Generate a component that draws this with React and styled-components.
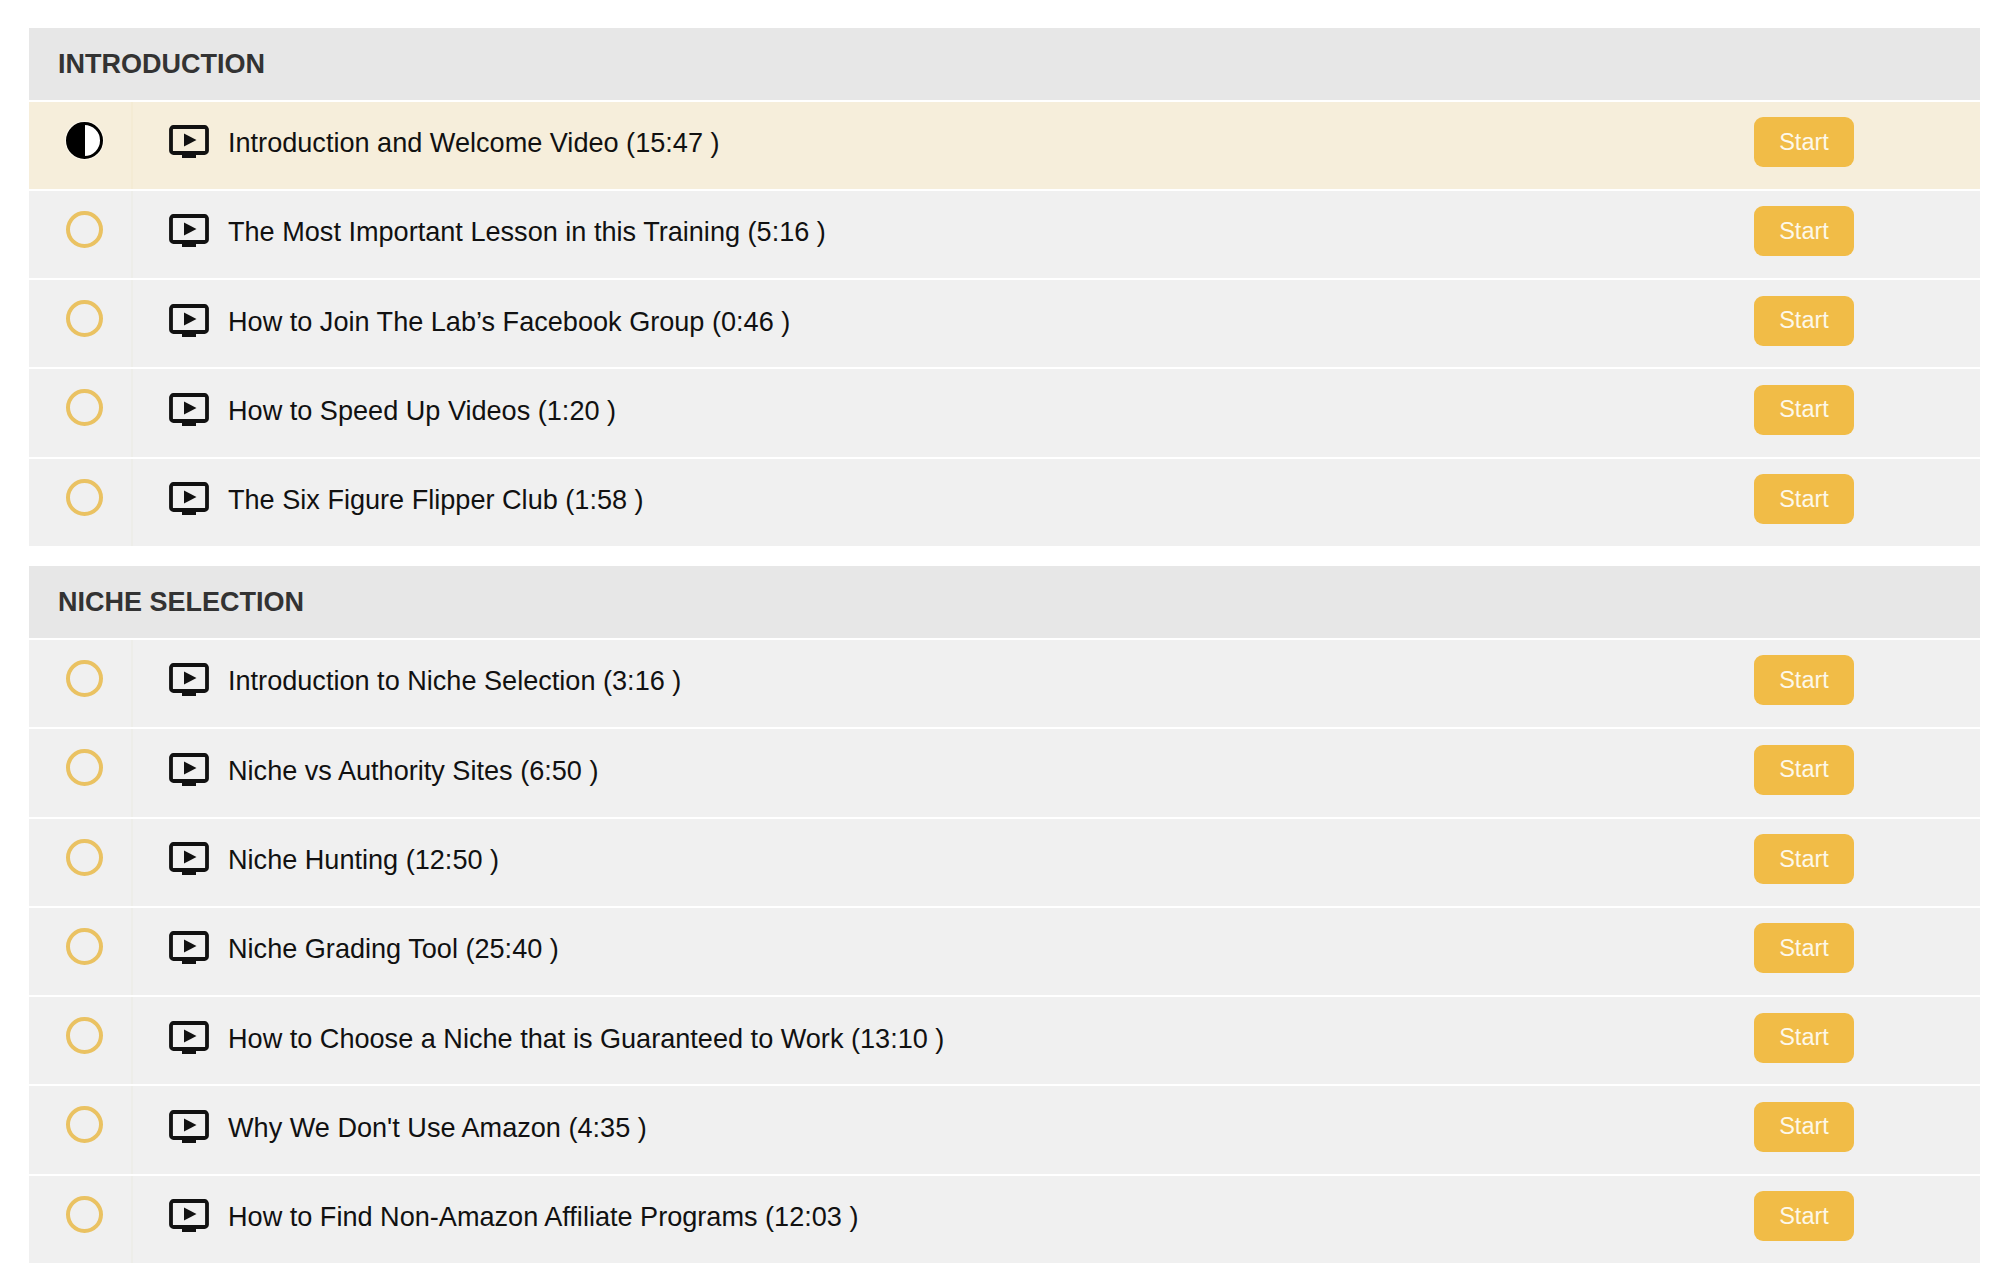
import React from 'react';
import styled, { createGlobalStyle } from 'styled-components';

const GlobalStyle = createGlobalStyle`
  html, body { margin: 0; padding: 0; background: #fff; }
  body { font-family: "Liberation Sans", Arial, sans-serif; }
`

const Page = styled.div`
  height: 1279px;
  overflow: hidden;
  box-sizing: border-box;
  padding: 28px 20px 0 29px;
  display: flex;
  flex-direction: column;
  gap: 20.5px;
`
const Section = styled.section`
  display: flex;
  flex-direction: column;
  gap: 2px;
`
const SectionTitle = styled.h2`
  margin: 0;
  height: 71.5px;
  box-sizing: border-box;
  padding: 20.5px 0 0 29px;
  background: #e7e7e7;
  color: #333;
  font-size: 27px;
  line-height: 31px;
  font-weight: 700;
`
const Row = styled.div`
  height: 87.3px;
  display: flex;
  align-items: flex-start;
  background: ${props => props.$active ? '#f6eedb' : '#f0f0f0'};
`
const StatusCell = styled.div`
  width: 104px;
  height: 100%;
  box-sizing: border-box;
  flex: none;
  padding: 20px 0 0 37px;
  border-right: 2px solid ${props => props.$active ? '#f4ebd4' : '#edede9'};
`
const Ring = styled.div`
  width: 37px;
  height: 37px;
  box-sizing: border-box;
  border: 4.5px solid #eac262;
  border-radius: 50%;
`
const HalfDisc = styled.div`
  width: 37px;
  height: 37px;
  box-sizing: border-box;
  border: 3px solid #000;
  border-radius: 50%;
  background: linear-gradient(to right, #000 50%, #fff 50%);
  box-shadow: 0 0 0 1px #fdf9ef;
`
const LessonCell = styled.div`
  flex: 1;
  display: flex;
  align-items: flex-start;
  padding: 23.5px 0 0 36px;
`
const LessonIcon = styled.svg`
  width: 40px;
  height: 34px;
  flex: none;
  display: block;
`
const LessonTitle = styled.span`
  margin: 0 0 0 19px;
  color: #111;
  font-size: 27.1px;
  line-height: 36px;
`
const StartButton = styled.button`
  flex: none;
  width: 100px;
  height: 50px;
  margin: 15.5px 126px 0 0;
  padding: 0;
  border: 0;
  border-radius: 9px;
  background: #f1bc47;
  color: #fdf8ea;
  font-family: inherit;
  font-size: 23.5px;
`

const sections = [
  {
    title: 'INTRODUCTION',
    lessons: [
      'Introduction and Welcome Video (15:47 )',
      'The Most Important Lesson in this Training (5:16 )',
      'How to Join The Lab’s Facebook Group (0:46 )',
      'How to Speed Up Videos (1:20 )',
      'The Six Figure Flipper Club (1:58 )',
    ],
  },
  {
    title: 'NICHE SELECTION',
    lessons: [
      'Introduction to Niche Selection (3:16 )',
      'Niche vs Authority Sites (6:50 )',
      'Niche Hunting (12:50 )',
      'Niche Grading Tool (25:40 )',
      'How to Choose a Niche that is Guaranteed to Work (13:10 )',
      "Why We Don't Use Amazon (4:35 )",
      'How to Find Non-Amazon Affiliate Programs (12:03 )',
    ],
  },
]

const VideoIcon = () => (
  <LessonIcon viewBox="0 0 40 34">
    <rect x="2" y="2" width="36" height="26" rx="2.5" fill="none" stroke="#111" strokeWidth="3.8" />
    <rect x="13" y="28" width="14" height="5" fill="#111" />
    <path d="M15 8.5 L27.5 15 L15 21.5 Z" fill="#111" />
  </LessonIcon>
)

const App = () => (
  <Page>
    <GlobalStyle />
    {sections.map((section, s) => (
      <Section key={section.title}>
        <SectionTitle>{section.title}</SectionTitle>
        {section.lessons.map((lesson, i) => {
          const active = s === 0 && i === 0
          return (
            <Row key={lesson} $active={active}>
              <StatusCell $active={active}>
                {active ? <HalfDisc /> : <Ring />}
              </StatusCell>
              <LessonCell>
                <VideoIcon />
                <LessonTitle>{lesson}</LessonTitle>
              </LessonCell>
              <StartButton>Start</StartButton>
            </Row>
          )
        })}
      </Section>
    ))}
  </Page>
)

export default App
